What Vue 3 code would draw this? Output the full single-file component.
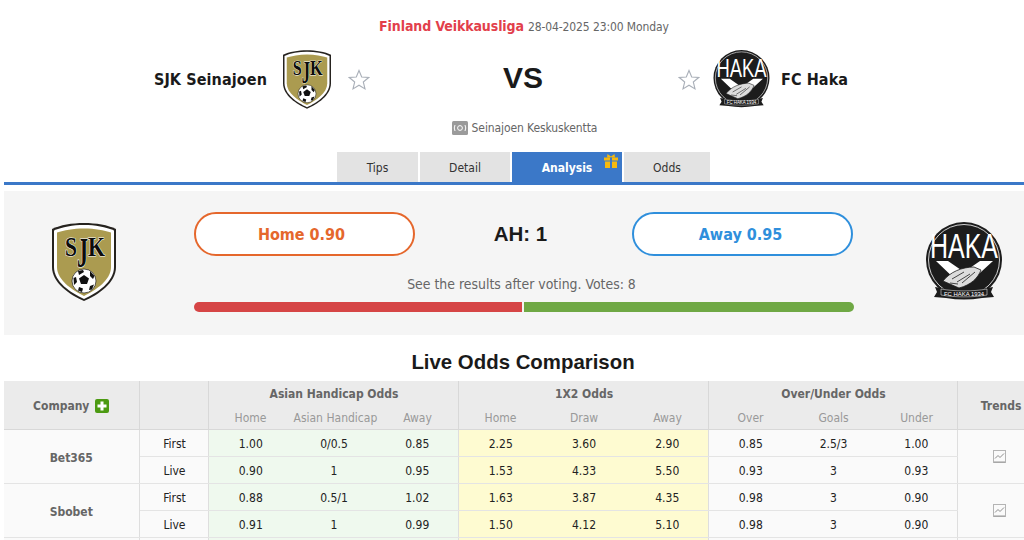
<script setup>
const rows = [
  { name: 'Bet365', lines: [
    { t: 'First', a: ['1.00', '0/0.5', '0.85'], x: ['2.25', '3.60', '2.90'], o: ['0.85', '2.5/3', '1.00'] },
    { t: 'Live', a: ['0.90', '1', '0.95'], x: ['1.53', '4.33', '5.50'], o: ['0.93', '3', '0.93'] },
  ] },
  { name: 'Sbobet', lines: [
    { t: 'First', a: ['0.88', '0.5/1', '1.02'], x: ['1.63', '3.87', '4.35'], o: ['0.98', '3', '0.90'] },
    { t: 'Live', a: ['0.91', '1', '0.99'], x: ['1.50', '4.12', '5.10'], o: ['0.98', '3', '0.90'] },
  ] },
]
</script>

<template>
  <div class="viewport">
    <svg class="defs" width="0" height="0" aria-hidden="true">
      <defs>
        <symbol id="sjk" viewBox="0 0 64 78">
          <path d="M32 0 C44 0 56 2 64 6 L64 44 C64 60 46 72 32 78 C18 72 0 60 0 44 L0 6 C8 2 20 0 32 0 Z" fill="#26231f"/>
          <path d="M32 2 C43 2 54 4 62 7.500 L62 44 C62 59 45 70 32 76 C19 70 2 59 2 44 L2 7.500 C10 4 21 2 32 2 Z" fill="#fff"/>
          <path d="M32 5.500 C43 5.500 52 7.500 59 9.500 L59 44 C59 57 44 67 32 73 C20 67 5 57 5 44 L5 9.500 C12 7.500 21 5.500 32 5.500 Z" fill="#ab9b50"/>
          <g font-family="'Liberation Serif', serif" font-weight="700" stroke="#fff" stroke-width="1" paint-order="stroke" fill="#0c0c0c">
            <text x="13" y="33" font-size="27" textLength="12" lengthAdjust="spacingAndGlyphs">S</text>
            <text transform="translate(25 44) scale(1 1.900)" font-size="22" stroke-width="0.600">J</text>
            <text x="36" y="33" font-size="27" textLength="17" lengthAdjust="spacingAndGlyphs">K</text>
          </g>
          <circle cx="32" cy="58" r="12" fill="#fff" stroke="#1d1d1d" stroke-width="0.700"/>
          <path d="M32 52 L37 55.500 L35 61 L29 61 L27 55.500 Z" fill="#111"/>
          <path d="M26 48 L31 47 L32 49 L27 52 Z M38 48 L42.500 53 L41 56 L38 53 Z M21.500 55 L24 54 L25 59 L22 62 Z M27 64 L31 65.500 L30 69 L26 67.500 Z M38 63 L42 61.500 L40 66.500 L37 67 Z" fill="#111"/>
        </symbol>
        <symbol id="haka" viewBox="0 0 76 80">
          <circle cx="38" cy="38" r="38" fill="#1c1c1c"/>
          <circle cx="38" cy="38" r="35.500" fill="none" stroke="#fff" stroke-width="0.800"/>
          <text x="38" y="36" text-anchor="middle" font-family="'Liberation Sans', sans-serif" font-size="35" textLength="68" lengthAdjust="spacingAndGlyphs" fill="#fff">HAKA</text>
          <path d="M10 39 H22 L38 50 L54 39 H67 L44 60 H32 Z" fill="#fff"/>
          <path d="M17 59 C24 50 36 45 48 45 L55 48 C52 56 45 63 33 66 Z" fill="#dcdcdc" stroke="#1c1c1c" stroke-width="0.800"/>
          <path d="M26 57 L38 50 M31 60 L44 52 M36 61 L49 50 M24 61 L32 62" stroke="#333" stroke-width="0.900" fill="none"/>
          <path d="M9 65 L15 66 C28 68 48 68 61 66 L67 65 L65 70 L68 75 L56 76 C44 78 32 78 20 76 L8 75 L11 70 Z" fill="#1c1c1c"/>
          <path d="M15 67 C28 69.500 48 69.500 61 67 L61 73 C48 75.500 28 75.500 15 73 Z" fill="none" stroke="#fff" stroke-width="0.500"/>
          <text x="38" y="73.500" text-anchor="middle" font-family="'Liberation Sans', sans-serif" font-size="6" textLength="40" lengthAdjust="spacingAndGlyphs" fill="#fff">FC HAKA 1934</text>
        </symbol>
      </defs>
    </svg>

    <div class="page">
      <header class="match">
        <div class="meta">
          <span class="league">Finland Veikkausliga</span>
          <span class="time">28-04-2025 23:00 Monday</span>
        </div>
        <div class="teams">
          <div class="team home">
            <span class="team-name">SJK Seinajoen</span>
            <svg class="crest-sm crest-home"><use href="#sjk"/></svg>
            <svg class="star" viewBox="0 0 22 22"><path d="M11 1.500 L13.700 8 L20.700 8.500 L15.300 13 L17 19.900 L11 16.200 L5 19.900 L6.700 13 L1.300 8.500 L8.300 8 Z" fill="#fff" stroke="#a9afb8" stroke-width="1.100"/></svg>
          </div>
          <div class="vs">VS</div>
          <div class="team away">
            <svg class="star" viewBox="0 0 22 22"><path d="M11 1.500 L13.700 8 L20.700 8.500 L15.300 13 L17 19.900 L11 16.200 L5 19.900 L6.700 13 L1.300 8.500 L8.300 8 Z" fill="#fff" stroke="#a9afb8" stroke-width="1.100"/></svg>
            <svg class="crest-sm crest-away"><use href="#haka"/></svg>
            <span class="team-name">FC Haka</span>
          </div>
        </div>
        <div class="venue">
          <svg class="pitch" viewBox="0 0 16 14">
            <rect width="16" height="14" rx="1.500" fill="#9b9b9b"/>
            <circle cx="8" cy="7" r="2.400" fill="none" stroke="#fff" stroke-width="1"/>
            <path d="M3 4 Q1.500 7 3 10 M13 4 Q14.500 7 13 10" fill="none" stroke="#fff" stroke-width="1"/>
          </svg>
          <span>Seinajoen Keskuskentta</span>
        </div>
      </header>

      <nav class="tabs">
        <a class="tab tab-tips">Tips</a>
        <a class="tab tab-detail">Detail</a>
        <a class="tab tab-active">
          Analysis
          <svg class="gift" viewBox="0 0 14 14">
            <path d="M3.500 0 L7 2.500 L10.500 0 L11 3.500 H3 Z" fill="#f6b90f"/>
            <rect x="0" y="3.500" width="14" height="3" fill="#f6b90f"/>
            <rect x="1" y="7.500" width="12" height="6.500" fill="#f6b90f"/>
            <rect x="6" y="3.500" width="2" height="10.500" fill="#3b78c8"/>
          </svg>
        </a>
        <a class="tab tab-odds">Odds</a>
      </nav>

      <section class="vote">
        <svg class="crest-lg crest-lg-home"><use href="#sjk"/></svg>
        <div class="vote-mid">
          <div class="vote-row">
            <button class="pill pill-home">Home 0.90</button>
            <div class="ah">AH: 1</div>
            <button class="pill pill-away">Away 0.95</button>
          </div>
          <div class="vote-note">See the results after voting. Votes: 8</div>
          <div class="bar"><span class="bar-home"></span><span class="bar-away"></span></div>
        </div>
        <svg class="crest-lg crest-lg-away"><use href="#haka"/></svg>
      </section>

      <h2 class="title">Live Odds Comparison</h2>

      <table class="odds">
        <colgroup>
          <col class="c-company"/><col class="c-type"/>
          <col class="c-n"/><col class="c-n2"/><col class="c-n"/>
          <col class="c-n"/><col class="c-n2"/><col class="c-n"/>
          <col class="c-n"/><col class="c-n"/><col class="c-n"/>
          <col class="c-trend"/>
        </colgroup>
        <thead>
          <tr class="h1">
            <th rowspan="2" class="company-h">
              <span class="company-wrap">Company <i class="plus">
                <svg viewBox="0 0 14 14"><path d="M5.500 2.500 H8.500 V5.500 H11.500 V8.500 H8.500 V11.500 H5.500 V8.500 H2.500 V5.500 H5.500 Z" fill="#fff"/></svg>
              </i></span>
            </th>
            <th rowspan="2"></th>
            <th colspan="3">Asian Handicap Odds</th>
            <th colspan="3">1X2 Odds</th>
            <th colspan="3">Over/Under Odds</th>
            <th rowspan="2" class="trends-h">Trends</th>
          </tr>
          <tr class="h2">
            <th>Home</th><th>Asian Handicap</th><th>Away</th>
            <th>Home</th><th>Draw</th><th>Away</th>
            <th>Over</th><th>Goals</th><th>Under</th>
          </tr>
        </thead>
        <tbody>
          <template v-for="r in rows" :key="r.name">
            <tr v-for="(l, i) in r.lines" :key="l.t">
              <td v-if="i === 0" rowspan="2" class="company">{{ r.name }}</td>
              <td class="type">{{ l.t }}</td>
              <td v-for="(v, j) in l.a" :key="'a' + j" class="ah-cell">{{ v }}</td>
              <td v-for="(v, j) in l.x" :key="'x' + j" class="x-cell">{{ v }}</td>
              <td v-for="(v, j) in l.o" :key="'o' + j" class="ou-cell">{{ v }}</td>
              <td v-if="i === 0" rowspan="2" class="trend">
                <svg class="chart" viewBox="0 0 13 13">
                  <rect x="0.500" y="0.500" width="12" height="12" fill="#fafafa" stroke="#b4b4b4"/>
                  <path d="M2 8.500 L5 5.500 L7 7.500 L11 3.500" fill="none" stroke="#8d8d8d" stroke-width="1"/>
                  <path d="M1 12 H12" stroke="#999" stroke-width="1"/>
                </svg>
              </td>
            </tr>
          </template>
          <tr class="stub">
            <td class="company"></td><td class="type"></td>
            <td class="ah-cell"></td><td class="ah-cell"></td><td class="ah-cell"></td>
            <td class="x-cell"></td><td class="x-cell"></td><td class="x-cell"></td>
            <td class="ou-cell"></td><td class="ou-cell"></td><td class="ou-cell"></td>
            <td class="trend"></td>
          </tr>
        </tbody>
      </table>
    </div>
  </div>
</template>

<style>
html, body { margin: 0; background: #fff; overflow: hidden; }
</style>

<style scoped>
.viewport {
  width: 1024px;
  height: 540px;
  overflow: hidden;
  font-family: "DejaVu Sans Condensed", "DejaVu Sans", sans-serif;
  color: #222;
}
.defs { position: absolute; }
.page { width: 1038px; margin-left: 4px; }

.match { height: 152px; padding-top: 1px; box-sizing: border-box; }
.meta {
  height: 48px;
  padding: 17px 0 0 2px;
  box-sizing: border-box;
  display: flex;
  justify-content: center;
  align-items: baseline;
  gap: 4px;
  font-size: 12px;
  letter-spacing: -0.1px;
}
.league { font-size: 14px; font-weight: 700; color: #e2404b; }
.time { color: #666; }
.teams { display: grid; grid-template-columns: 1fr 200px 1fr; align-items: center; height: 61px; }
.team { display: flex; align-items: center; }
.team.home { justify-content: flex-end; padding-right: 53px; }
.team.away { padding-left: 55px; }
.team-name { font-size: 16px; font-weight: 700; color: #1a1a1a; letter-spacing: 0.1px; }
.crest-sm { display: block; height: 59px; }
.crest-home { width: 48px; margin: 0 17px 0 16px; }
.crest-away { width: 57px; margin: 0 11px 0 13px; }
.star { width: 22px; height: 22px; display: block; }
.vs { text-align: center; padding-bottom: 3px; font-family: "Liberation Sans", sans-serif; font-weight: 700; font-size: 30px; color: #1a1a1a; }
.venue {
  margin-top: 9px;
  padding-left: 3px;
  display: flex; justify-content: center; align-items: center; gap: 4px;
  font-size: 12px; color: #666;
  letter-spacing: -0.1px;
  height: 18px;
}
.pitch { width: 16px; height: 14px; }

.tabs {
  height: 30px;
  padding-left: 333px;
  display: flex;
  gap: 2px;
  border-bottom: 3px solid #3b78c8;
}
.tab {
  position: relative;
  display: flex; align-items: center; justify-content: center;
  box-sizing: border-box;
  padding-top: 2px;
  background: #e3e3e3;
  color: #333;
  font-size: 12px;
}
.tab-tips { width: 81px; }
.tab-detail { width: 90px; }
.tab-active { width: 110px; background: #3b78c8; color: #fff; font-weight: 700; }
.tab-odds { width: 86px; }
.gift { position: absolute; right: 4px; top: 2px; width: 14px; height: 14px; }

.vote {
  margin-top: 6px;
  height: 144px;
  background: #f5f5f5;
  display: grid;
  grid-template-columns: 190px 660px 1fr;
  position: relative;
}
.crest-lg { display: block; height: 78px; }
.crest-lg-home { width: 64px; margin: 32px 0 0 48px; }
.crest-lg-away { width: 76px; margin: 31px 0 0 72px; height: 80px; }
.vote-mid { padding-top: 21px; }
.vote-row { display: grid; grid-template-columns: 221px 217px 221px; align-items: center; }
.pill {
  height: 44px;
  border-radius: 22px;
  background: #fff;
  font: 700 16px "DejaVu Sans Condensed", "DejaVu Sans", sans-serif;
}
.pill-home { border: 2px solid #e5672c; color: #e5672c; padding: 0 6px 0 0; }
.pill-away { border: 2px solid #2f8fdc; color: #2f8fdc; padding: 0 4px 0 0; }
.ah { text-align: center; padding-right: 6px; font-family: "Liberation Sans", sans-serif; font-weight: 700; font-size: 20.500px; color: #1a1a1a; }
.vote-note { margin-top: 18px; padding-right: 5px; text-align: center; font-size: 13.900px; color: #666; line-height: 20px; }
.bar { margin-top: 8px; height: 10px; display: flex; gap: 2px; }
.bar-home { flex: 0 0 328px; background: #d64546; border-radius: 5px 0 0 5px; }
.bar-away { flex: 0 0 330px; background: #6fa844; border-radius: 0 5px 5px 0; }

.title {
  margin: 15px 0 0;
  height: 31px;
  text-align: center;
  font-family: "Liberation Sans", sans-serif;
  font-size: 20.400px;
  line-height: 24px;
  font-weight: 700;
  color: #1a1a1a;
}

.odds { width: 1038px; table-layout: fixed; border-collapse: collapse; font-size: 12px; }
.c-company { width: 135px; }
.c-type { width: 69px; }
.c-n { width: 83px; }
.c-n2 { width: 84px; }
.c-trend { width: 85px; }
.odds th, .odds td { padding: 2px 0 0 2px; text-align: center; border: 1px solid #dedede; white-space: nowrap; }
.odds th { background: #ebebeb; color: #666; font-weight: 700; border-color: #d8d8d8; }
.odds thead tr:first-child th { border-top: 0; }
.odds tr > :first-child { border-left: 0; }
.h1 th { height: 22px; }
.h2 th { height: 22px; font-weight: 400; color: #999; border-left-color: transparent; border-right-color: transparent; border-top: 0; }
.h1 th[colspan] { border-bottom: 0; }
.h2 th:nth-child(3n + 1) { border-left-color: #d8d8d8; }
.h2 th:nth-child(3n) { border-right-color: #d8d8d8; }
.company-wrap { display: inline-flex; align-items: center; gap: 6px; }
.plus { width: 14px; height: 14px; background: #4c9a12; border-radius: 2px; display: block; }
.plus svg { display: block; width: 14px; height: 14px; }
.odds .company-h { padding-left: 0; }
.odds .trends-h { padding-left: 3px; }

.odds tbody td { height: 24px; color: #222; border-left: 0; border-right: 0; border-color: #e4e4e4; }
.odds tbody .company { padding-left: 0; background: #fafafa; color: #666; font-weight: 700; border-right: 1px solid #dedede; }
.odds tbody .type { background: #fafafa; border-right: 1px solid #dedede; }
.odds tbody .ah-cell { background: #eff9ee; }
.odds tbody .x-cell { background: #fefbd1; }
.odds tbody .ah-cell + .x-cell { border-left: 1px solid #dedede; }
.odds tbody .ou-cell { background: #fafafa; }
.odds tbody .x-cell + .ou-cell { border-left: 1px solid #dedede; }
.odds tbody .trend { padding: 0; background: #fafafa; border-left: 1px solid #dedede; }
.chart { width: 13px; height: 13px; display: block; margin: 0 auto; }
</style>
